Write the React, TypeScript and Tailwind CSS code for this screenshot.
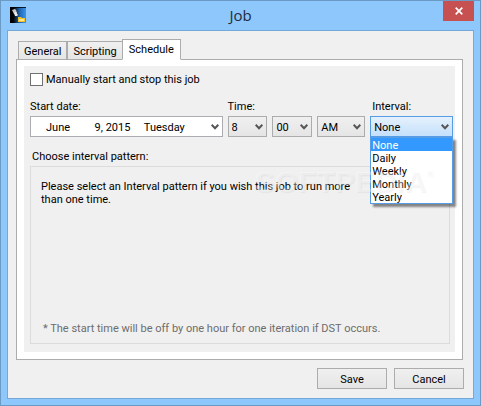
import { useState } from "react";
import type { ReactNode, SelectHTMLAttributes } from "react";
import clsx from "clsx";

const tabs = ["General", "Scripting", "Schedule"];
const intervals = ["None", "Daily", "Weekly", "Monthly", "Yearly"];

function Chevron() {
  return (
    <svg
      viewBox="0 0 8 6"
      className="pointer-events-none absolute top-2 right-1 h-[6px] w-2"
      fill="none"
      stroke="#555"
      strokeWidth="2"
    >
      <path d="M0.7 0.8 4 4.2 7.3 0.8" />
    </svg>
  );
}

interface SelectProps extends SelectHTMLAttributes<HTMLSelectElement> {
  options: string[];
  open?: boolean;
}

function Select({ options, open, ...props }: SelectProps) {
  return (
    <div className="relative">
      <select
        {...props}
        className={clsx(
          "block h-[21px] w-full appearance-none border pt-px pl-[3px] outline-none",
          open
            ? "border-[#569de5] bg-linear-to-b from-[#e5f1fc] to-[#c4e0fb]"
            : "border-[#acacac] bg-linear-to-b from-[#f0f0f0] to-[#e5e5e5]",
        )}
      >
        {options.map((option) => (
          <option key={option}>{option}</option>
        ))}
      </select>
      <Chevron />
    </div>
  );
}

function DialogButton({ children }: { children: ReactNode }) {
  return (
    <button
      type="button"
      className="h-[21px] w-[70px] border border-[#acacac] bg-linear-to-b from-[#f0f0f0] to-[#e5e5e5] pt-px"
    >
      {children}
    </button>
  );
}

function AppIcon() {
  return (
    <svg viewBox="0 0 16 16" className="h-4 w-4">
      <defs>
        <linearGradient id="sky">
          <stop offset="0.2" stopColor="#000" />
          <stop offset="0.6" stopColor="#1f66b4" />
          <stop offset="1" stopColor="#3c95ea" />
        </linearGradient>
      </defs>
      <rect width="16" height="16" fill="url(#sky)" />
      <path d="M0 0h16v1H0z" fill="#000" fillOpacity="0.8" />
      <path d="M2 3 5 2l1 1 1 3-3 1z" fill="#c9c9c9" />
      <path d="M4 6 6 5l2 3-1 1H5z" fill="#ededed" />
      <path d="M8 10h3l1 1h3v4H8z" fill="#f2c22e" />
      <path d="M9 12h5v2H9z" fill="#ffe88c" />
    </svg>
  );
}

export default function App() {
  const [tab, setTab] = useState("Schedule");
  const [interval, setInterval] = useState("None");

  return (
    <div className="flex min-h-screen flex-col border border-[#6b9ac5] bg-[#8dc7fb] px-[6px] pb-[6px] font-[Roboto,sans-serif] text-[11px] leading-[13px] text-black">
      <header className="grid h-[29px] grid-cols-[1fr_auto_1fr] items-start">
        <div className="pt-[6px] pl-[3px]">
          <AppIcon />
        </div>
        <h1 className="pt-1 font-['Open_Sans',sans-serif] text-[15px] leading-5 text-[#222c3c]">
          Job
        </h1>
        <button
          type="button"
          aria-label="Close"
          className="flex h-5 w-[31px] items-center justify-center justify-self-end bg-[#c75050]"
        >
          <svg viewBox="0 0 8 8" className="h-2 w-2" stroke="#fff" strokeWidth="1.7">
            <path d="M0.7 0.7 7.3 7.3M7.3 0.7 0.7 7.3" />
          </svg>
        </button>
      </header>

      <main className="flex flex-1 flex-col border border-[#74a8d8] bg-[#f0f0f0] pt-2 pr-[10px] pb-[9px] pl-2">
        <div role="tablist" className="relative z-10 -mb-px flex items-end pl-[2px]">
          {tabs.map((name) => (
            <button
              key={name}
              type="button"
              role="tab"
              aria-selected={tab === name}
              onClick={() => setTab(name)}
              className={clsx(
                "border border-[#acacac]",
                tab === name
                  ? "-ml-px h-[21px] border-b-white bg-white px-[6px] pb-px"
                  : "h-[19px] bg-linear-to-b from-[#f0f0f0] to-[#e5e5e5] px-[5px] pt-px",
              )}
            >
              {name}
            </button>
          ))}
        </div>

        <section className="flex flex-1 flex-col border border-[#acacac] bg-white p-[7px] pt-[6px]">
          <div className="flex flex-1 flex-col bg-[#f0f0f0] pt-[6px] pr-[2px] pb-2 pl-[6px]">
            <label className="flex items-center gap-[3px]">
              <input
                type="checkbox"
                className="h-[13px] w-[13px] appearance-none border border-[#707070] bg-white checked:bg-[#3399ff]"
              />
              <span className="pt-px">Manually start and stop this job</span>
            </label>

            <div className="mt-[14px] grid grid-cols-[193fr_40fr_40fr_48fr_83fr] gap-x-[5px] gap-y-[3px]">
              <label htmlFor="date">Start date:</label>
              <label htmlFor="hour" className="col-span-3">
                Time:
              </label>
              <label htmlFor="interval" className="pl-[2px]">
                Interval:
              </label>

              <div className="relative">
                <input
                  id="date"
                  type="text"
                  defaultValue={"June         9, 2015     Tuesday"}
                  className="block h-[21px] w-full border border-[#abadb3] bg-white pt-px pl-[15px] outline-none"
                />
                <Chevron />
              </div>
              <Select id="hour" options={["8"]} />
              <Select aria-label="Minute" options={["00"]} />
              <Select aria-label="AM or PM" options={["AM", "PM"]} />
              <div className="relative">
                <Select
                  id="interval"
                  options={intervals}
                  value={interval}
                  onChange={(e) => setInterval(e.target.value)}
                  open
                />
                <ul
                  role="listbox"
                  aria-label="Interval"
                  className="absolute top-full left-0 z-10 w-full border border-[#569de5] bg-white shadow-[3px_3px_2px_rgba(0,0,0,0.45)]"
                >
                  {intervals.map((name) => (
                    <li
                      key={name}
                      role="option"
                      aria-selected={name === interval}
                      onClick={() => setInterval(name)}
                      className={clsx(
                        "h-[13px] pt-px pl-px",
                        name === interval && "bg-[#3399ff] text-white",
                      )}
                    >
                      {name}
                    </li>
                  ))}
                </ul>
              </div>
            </div>

            <h2 className="mt-[13px] pl-[2px]">Choose interval pattern:</h2>
            <div className="relative mt-[3px] mr-[3px] flex flex-1 flex-col justify-between border border-[#dcdcdc] px-[10px] pt-[13px] pb-2">
              <p className="max-w-[325px]">
                Please select an Interval pattern if you wish this job to run more than one time.
              </p>
              <p className="pl-[2px] text-[#6d6d6d]">
                * The start time will be off by one hour for one iteration if DST occurs.
              </p>
              <div
                aria-hidden="true"
                className="pointer-events-none absolute -top-px right-4 z-20 flex items-start font-['Liberation_Sans',sans-serif] text-[30px] leading-8 font-bold text-white/35 [text-shadow:1px_1px_1px_rgba(0,0,0,0.05)]"
              >
                SOFTPEDIA<span className="text-[9px] leading-4">®</span>
              </div>
            </div>
          </div>
        </section>

        <footer className="-mr-px mt-2 flex justify-end gap-[7px]">
          <DialogButton>Save</DialogButton>
          <DialogButton>Cancel</DialogButton>
        </footer>
      </main>
    </div>
  );
}
